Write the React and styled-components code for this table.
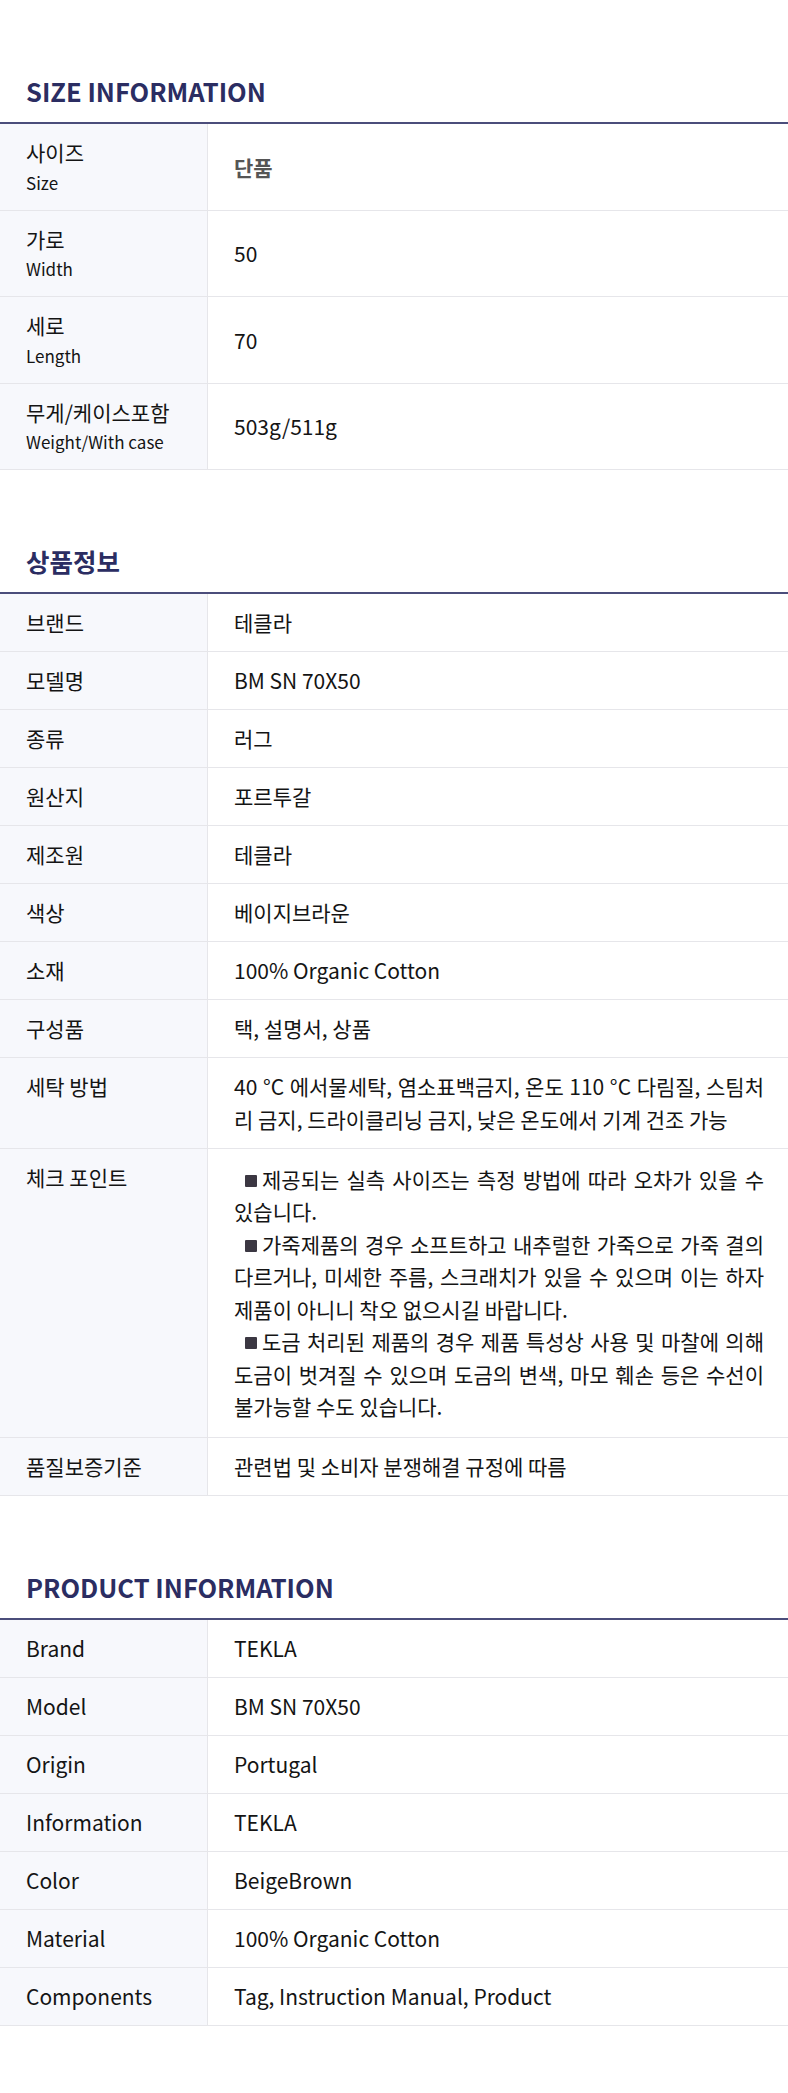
import React from "react";
import styled, { createGlobalStyle } from "styled-components";

const GlobalStyle = createGlobalStyle`
    html, body {
        margin: 0;
        padding: 0;
        background: #fff;
    }
    body {
        font-family: "Noto Sans CJK KR", "Noto Sans", sans-serif;
        color: #141414;
    }
`

const Page = styled.div`
    width: 788px;
    padding-bottom: 60px;
`

const Section = styled.section`
    padding-top: 71px;
`

const Title = styled.h2`
    margin: 0 0 11px;
    padding-left: 26px;
    font-size: 25.5px;
    line-height: 40px;
    font-weight: 700;
    color: #2b2d62;
`

const Table = styled.div`
    border-top: 2px solid #4b4d7b;
`

const Row = styled.div`
    display: grid;
    grid-template-columns: 208px 1fr;
    border-bottom: 1px solid #e6e6ea;
`

const Label = styled.div`
    background: #f7f8fc;
    border-right: 1px solid #e6e6ea;
    padding: 12.25px 16px 12.25px 26px;
    font-size: 21px;
    line-height: 32.5px;
`

const SubLabel = styled.div`
    font-size: 17px;
    line-height: 28.5px;
`

const Value = styled.div`
    display: flex;
    flex-direction: column;
    justify-content: center;
    padding: ${props => props.$loose ? "14px" : "12.25px"} 24px ${props => props.$loose ? "14px" : "12.25px"} 26px;
    font-size: 21px;
    line-height: 32.5px;
    text-align: justify;
    color: ${props => props.$muted ? "#555" : "#141414"};
    font-weight: ${props => props.$muted ? 700 : 400};
`

const Note = styled.div`
    text-align: justify;
`

const Bullet = styled.span`
    display: inline-block;
    width: 12px;
    height: 12px;
    margin: 0 5px 0 11px;
    border-radius: 1px;
    background: #3b3742;
    vertical-align: 1px;
`

const sizeRows = [
    { ko: "사이즈", en: "Size", value: "단품", muted: true },
    { ko: "가로", en: "Width", value: "50" },
    { ko: "세로", en: "Length", value: "70" },
    { ko: "무게/케이스포함", en: "Weight/With case", value: "503g/511g" },
]

const notes = [
    "제공되는 실측 사이즈는 측정 방법에 따라 오차가 있을 수 있습니다.",
    "가죽제품의 경우 소프트하고 내추럴한 가죽으로 가죽 결의 다르거나, 미세한 주름, 스크래치가 있을 수 있으며 이는 하자 제품이 아니니 착오 없으시길 바랍니다.",
    "도금 처리된 제품의 경우 제품 특성상 사용 및 마찰에 의해 도금이 벗겨질 수 있으며 도금의 변색, 마모 훼손 등은 수선이 불가능할 수도 있습니다.",
]

const koRows = [
    ["브랜드", "테클라"],
    ["모델명", "BM SN 70X50"],
    ["종류", "러그"],
    ["원산지", "포르투갈"],
    ["제조원", "테클라"],
    ["색상", "베이지브라운"],
    ["소재", "100% Organic Cotton"],
    ["구성품", "택, 설명서, 상품"],
    ["세탁 방법", "40 °C 에서물세탁, 염소표백금지, 온도 110 °C 다림질, 스팀처리 금지, 드라이클리닝 금지, 낮은 온도에서 기계 건조 가능"],
    ["체크 포인트", null],
    ["품질보증기준", "관련법 및 소비자 분쟁해결 규정에 따름"],
]

const enRows = [
    ["Brand", "TEKLA"],
    ["Model", "BM SN 70X50"],
    ["Origin", "Portugal"],
    ["Information", "TEKLA"],
    ["Color", "BeigeBrown"],
    ["Material", "100% Organic Cotton"],
    ["Components", "Tag, Instruction Manual, Product"],
]

const App = () => {
    return (
        <Page>
            <GlobalStyle />

            <Section>
                <Title>SIZE INFORMATION</Title>
                <Table>
                    {sizeRows.map(r => (
                        <Row key={r.en}>
                            <Label>
                                {r.ko}
                                <SubLabel>{r.en}</SubLabel>
                            </Label>
                            <Value $muted={r.muted}>{r.value}</Value>
                        </Row>
                    ))}
                </Table>
            </Section>

            <Section>
                <Title>상품정보</Title>
                <Table>
                    {koRows.map(([label, value]) => (
                        <Row key={label}>
                            <Label>{label}</Label>
                            {value !== null ? (
                                <Value>{value}</Value>
                            ) : (
                                <Value $loose>
                                    {notes.map(n => (
                                        <Note key={n}><Bullet />{n}</Note>
                                    ))}
                                </Value>
                            )}
                        </Row>
                    ))}
                </Table>
            </Section>

            <Section>
                <Title>PRODUCT INFORMATION</Title>
                <Table>
                    {enRows.map(([label, value]) => (
                        <Row key={label}>
                            <Label>{label}</Label>
                            <Value>{value}</Value>
                        </Row>
                    ))}
                </Table>
            </Section>
        </Page>
    )
}

export default App;
